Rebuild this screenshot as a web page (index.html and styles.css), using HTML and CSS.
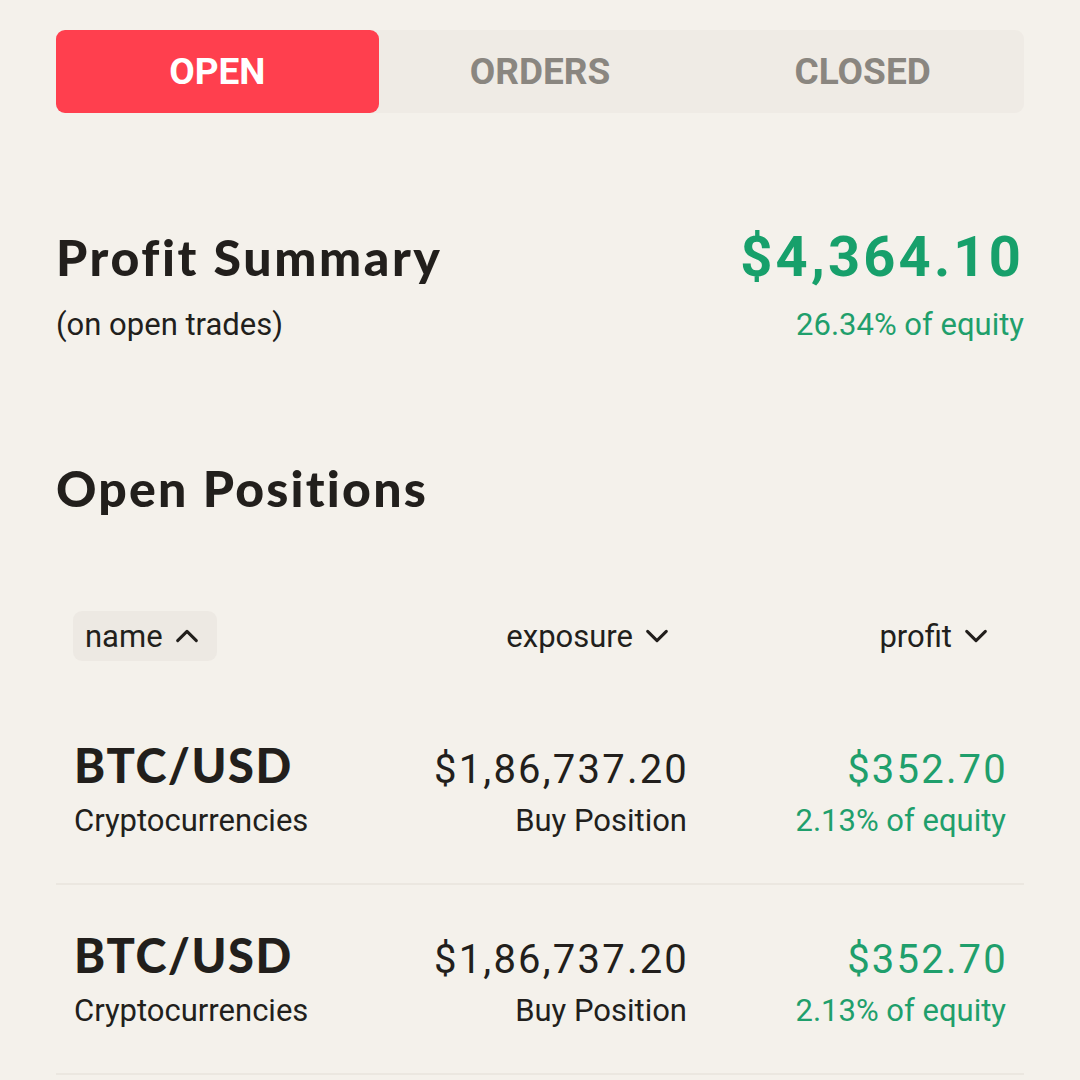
FILE: index.html
```html
<!DOCTYPE html>
<html lang="en">
<head>
  <meta charset="UTF-8">
  <title>Positions</title>
  <link rel="stylesheet" href="styles.css">
</head>
<body>

<div class="container">
  <div class="tabs">
    <div class="tab active">OPEN</div>
    <div class="tab">ORDERS</div>
    <div class="tab">CLOSED</div>
  </div>

  <div class="summary">
    <div>
      <h2>Profit Summary</h2>
      <p class="sub">(on open trades)</p>
    </div>
    <div class="summary-right">
      <div class="big-amount">$4,364.10</div>
      <p class="sub green">26.34% of equity</p>
    </div>
  </div>

  <h2 class="section-title">Open Positions</h2>

  <div class="sort-row">
    <div class="sort-btn selected">name
      <svg viewBox="0 0 24 24"><path d="M4 16l8-8 8 8"/></svg>
    </div>
    <div class="sort-btn right">exposure
      <svg viewBox="0 0 24 24"><path d="M4 8l8 8 8-8"/></svg>
    </div>
    <div class="sort-btn right">profit
      <svg viewBox="0 0 24 24"><path d="M4 8l8 8 8-8"/></svg>
    </div>
  </div>

  <div class="positions">
    <div class="position">
      <div class="cell">
        <div class="symbol">BTC/USD</div>
        <div class="small">Cryptocurrencies</div>
      </div>
      <div class="cell right">
        <div class="amount">$1,86,737.20</div>
        <div class="small">Buy Position</div>
      </div>
      <div class="cell right">
        <div class="amount green">$352.70</div>
        <div class="small green">2.13% of equity</div>
      </div>
    </div>

    <div class="position">
      <div class="cell">
        <div class="symbol">BTC/USD</div>
        <div class="small">Cryptocurrencies</div>
      </div>
      <div class="cell right">
        <div class="amount">$1,86,737.20</div>
        <div class="small">Buy Position</div>
      </div>
      <div class="cell right">
        <div class="amount green">$352.70</div>
        <div class="small green">2.13% of equity</div>
      </div>
    </div>
  </div>
</div>

</body>
</html>
```

FILE: styles.css
```css
body {
  margin: 0;
  background: #f4f1eb;
  font-family: Roboto, sans-serif;
  color: #221f1c;
}
.container {
  padding: 30px 56px 0;
}
.tabs {
  display: grid;
  grid-template-columns: 1fr 1fr 1fr;
  height: 83px;
  background: #efebe5;
  border-radius: 9px;
}
.tab {
  display: flex;
  align-items: center;
  justify-content: center;
  font-size: 37px;
  font-weight: bold;
  color: #8a8680;
  border-radius: 9px;
}
.tab.active {
  background: #ff3f4e;
  color: #fff;
}
h2 {
  margin: 0;
  font-family: Lato, sans-serif;
  font-size: 50px;
  line-height: 64px;
  font-weight: 900;
  letter-spacing: 2.6px;
}
.summary {
  display: flex;
  justify-content: space-between;
  margin-top: 112px;
}
.summary-right {
  text-align: right;
}
.sub {
  margin: 16px 0 0;
  font-size: 31px;
  line-height: 40px;
}
.big-amount {
  font-size: 56px;
  line-height: 64px;
  font-weight: bold;
  letter-spacing: 3.2px;
  color: #17a06b;
}
.green {
  color: #1f9f6c;
}
.section-title {
  margin-top: 111px;
  letter-spacing: 2.2px;
}
.sort-row {
  display: grid;
  grid-template-columns: 1fr 300px 319px;
  margin: 91px 18px 0 17px;
}
.sort-btn {
  display: flex;
  align-items: center;
  gap: 10px;
  height: 50px;
  padding: 0 16px 0 12px;
  font-size: 31px;
  border-radius: 9px;
}
.sort-btn.selected {
  justify-self: start;
  background: #ede9e3;
}
.sort-btn.right {
  justify-self: end;
}
.sort-btn svg {
  width: 28px;
  height: 28px;
  fill: none;
  stroke: #221f1c;
  stroke-width: 2.6;
  stroke-linecap: round;
  stroke-linejoin: round;
}
.positions {
  margin-top: 34px;
}
.position {
  display: grid;
  grid-template-columns: 1fr 300px 319px;
  align-items: end;
  padding: 41px 18px 42px;
  border-bottom: 2px solid #ebe7e0;
}
.cell.right {
  text-align: right;
}
.symbol {
  font-family: Lato, sans-serif;
  font-size: 47px;
  line-height: 59px;
  font-weight: 900;
  letter-spacing: 1.5px;
}
.amount {
  font-size: 40px;
  line-height: 50px;
  letter-spacing: 2.2px;
  margin-right: -2px;
}
.small {
  margin-top: 6px;
  font-size: 31px;
  line-height: 40px;
}
```
